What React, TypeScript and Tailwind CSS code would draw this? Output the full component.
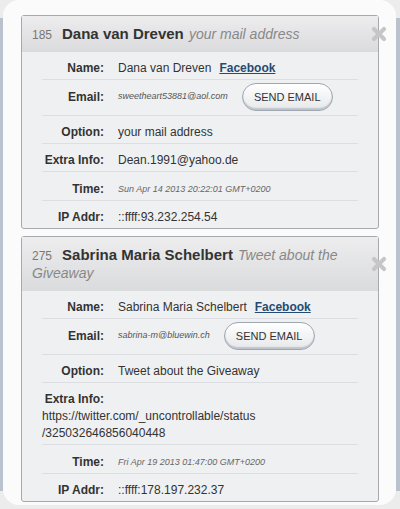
import React from "react"

type Entry = {
  id: number
  name: string
  option: string
  email: string
  extra: React.ReactNode
  time: string
  ip: string
}

const entries: Entry[] = [
  {
    id: 185,
    name: "Dana van Dreven",
    option: "your mail address",
    email: "sweetheart53881@aol.com",
    extra: "Dean.1991@yahoo.de",
    time: "Sun Apr 14 2013 20:22:01 GMT+0200",
    ip: "::ffff:93.232.254.54",
  },
  {
    id: 275,
    name: "Sabrina Maria Schelbert",
    option: "Tweet about the Giveaway",
    email: "sabrina-m@bluewin.ch",
    extra: (
      <>
        https://twitter.com/_uncontrollable/status
        <wbr />
        /325032646856040448
      </>
    ),
    time: "Fri Apr 19 2013 01:47:00 GMT+0200",
    ip: "::ffff:178.197.232.37",
  },
]

function CloseIcon() {
  return (
    <svg width="16" height="16" viewBox="0 0 16 16" className="block">
      <path d="M3 3 L13 13 M13 3 L3 13" stroke="#c6c6c6" strokeWidth="4.2" strokeLinecap="round" />
    </svg>
  )
}

// label on the left, value wraps under it when it doesn't fit
function Row({ label, children, last }: { label: string; children: React.ReactNode; last?: boolean }) {
  return (
    <div
      className={
        "flex flex-wrap items-center pt-[8px] pb-[2px] leading-[17px] " +
        (last ? "" : "border-b border-[#dcdee1]")
      }
    >
      <span className="w-[62px] mr-[14px] text-right font-bold text-[#333]">{label}</span>
      <span className="text-[#333]">{children}</span>
    </div>
  )
}

function EntryCard({ entry }: { entry: Entry }) {
  return (
    <div className="rounded-[3px] border border-[#a7a9ac] bg-[#eff0f2]">
      <div className="relative bg-gradient-to-b from-[#ededee] to-[#dadbdd] pl-[10px] pr-[30px] py-[9px] text-[15px] leading-[18px]">
        <span className="mr-[10px] text-[12px] leading-[14px] text-[#777]">{entry.id}</span>
        <span className="font-bold text-[#333]">{entry.name}</span>{" "}
        <span className="ml-[1px] text-[14px] leading-[17px] italic text-[#888]">{entry.option}</span>
        <button className="absolute right-[-9px] top-1/2 -translate-y-1/2">
          <CloseIcon />
        </button>
      </div>

      <div className="px-[20px] text-[12px]">
        <Row label="Name:">
          {entry.name}
          <a href="#" className="ml-[8px] font-bold text-[#264b73] underline">
            Facebook
          </a>
        </Row>

        <div className="flex items-center pt-[3px] pb-[4px] border-b border-[#dcdee1]">
          <span className="w-[62px] mr-[14px] text-right font-bold text-[#333]">Email:</span>
          <span className="text-[9px] italic text-[#555]">{entry.email}</span>
          <button className="ml-[14px] h-[28px] w-[91px] rounded-full border border-[#9ea6b0] bg-gradient-to-b from-white to-[#e6e8ea] text-[11px] text-[#333] shadow-[inset_0_-2px_1px_rgba(120,130,145,0.35)]">
            SEND EMAIL
          </button>
        </div>

        <Row label="Option:">{entry.option}</Row>
        <Row label="Extra Info:">{entry.extra}</Row>
        <Row label="Time:">
          <span className="text-[9px] italic text-[#666]">{entry.time}</span>
        </Row>
        <Row label="IP Addr:" last>
          {entry.ip}
        </Row>
      </div>
    </div>
  )
}

export default function App() {
  return (
    <div className="flex h-[509px] w-[400px] overflow-hidden bg-[#ececec] font-['Liberation_Sans',Arial,sans-serif]">
      <div className="my-[18px] w-[3px] bg-[#bac2ce]" />
      <div className="h-[505px] flex-1 rounded-[16px] bg-[#fbfbfb] pt-[15px] pl-[18px] pr-[17px]">
        <div className="flex flex-col gap-[7px]">
          {entries.map((entry) => (
            <EntryCard key={entry.id} entry={entry} />
          ))}
        </div>
      </div>
      <div className="my-[18px] w-[4px] bg-[#bac2ce]" />
    </div>
  )
}
